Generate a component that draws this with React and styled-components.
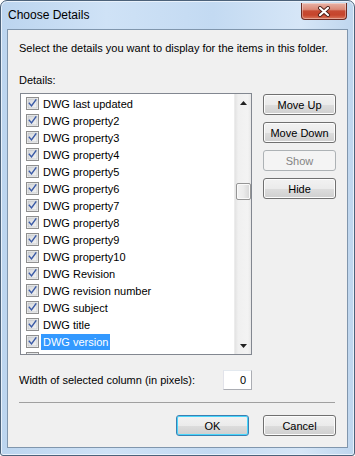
import React from "react"
import styled, { createGlobalStyle } from "styled-components"

const GlobalStyle = createGlobalStyle`
  html, body {
    margin: 0;
    padding: 0;
    background: #ffffff;
  }
  body {
    font-family: "Liberation Sans", Arial, sans-serif;
    font-size: 11px;
    color: #000;
  }
  * {
    box-sizing: border-box;
  }
`

// last row is scrolled half out of view, only its checkbox top shows
const details = [
  { label: "DWG last updated" },
  { label: "DWG property2" },
  { label: "DWG property3" },
  { label: "DWG property4" },
  { label: "DWG property5" },
  { label: "DWG property6" },
  { label: "DWG property7" },
  { label: "DWG property8" },
  { label: "DWG property9" },
  { label: "DWG property10" },
  { label: "DWG Revision" },
  { label: "DWG revision number" },
  { label: "DWG subject" },
  { label: "DWG title" },
  { label: "DWG version", selected: true },
  { label: "" },
]

function CheckBox() {
  return (
    <svg width="13" height="13" viewBox="0 0 13 13">
      <defs>
        <linearGradient id="cbg" x1="0" y1="0" x2="1" y2="1">
          <stop offset="0" stopColor="#d4d6d9" />
          <stop offset="1" stopColor="#f4f4f4" />
        </linearGradient>
      </defs>
      <rect x="0.5" y="0.5" width="12" height="12" fill="#f6f6f6" stroke="#8f8f8f" />
      <rect x="2" y="2" width="9" height="9" fill="url(#cbg)" stroke="#b4b8bd" strokeWidth="0.6" />
      <path
        d="M3.4 6.4 L5.5 8.9 L9.8 3"
        fill="none"
        stroke="#3a5aa6"
        strokeWidth="1.5"
        strokeLinecap="square"
      />
    </svg>
  )
}

function CloseGlyph() {
  return (
    <svg width="14" height="11" viewBox="0 0 14 11">
      <path
        d="M3 2 L11 9 M11 2 L3 9"
        stroke="#4a1e18"
        strokeWidth="4"
        strokeLinecap="round"
      />
      <path
        d="M3 2 L11 9 M11 2 L3 9"
        stroke="#ffffff"
        strokeWidth="2.2"
        strokeLinecap="round"
      />
    </svg>
  )
}

function Arrow({ down }) {
  return (
    <svg width="7" height="4" viewBox="0 0 7 4">
      <path d={down ? "M0 0 H7 L3.5 4 Z" : "M0 4 H7 L3.5 0 Z"} fill="#222" />
    </svg>
  )
}

export default function App() {
  return (
    <>
      <GlobalStyle />
      <Window>
        <TitleBar>
          <Title>Choose Details</Title>
          <CloseButton>
            <CloseGlyph />
          </CloseButton>
        </TitleBar>
        <Client>
          <Intro>Select the details you want to display for the items in this folder.</Intro>
          <FieldLabel>Details:</FieldLabel>
          <Body>
            <ListBox>
              <Items>
                {details.map((d, i) => (
                  <Item key={i}>
                    <CheckBox />
                    {d.label && <ItemText selected={d.selected}>{d.label}</ItemText>}
                  </Item>
                ))}
              </Items>
              <ScrollBar>
                <ScrollArrow>
                  <Arrow />
                </ScrollArrow>
                <Track>
                  <Thumb />
                </Track>
                <ScrollArrow>
                  <Arrow down />
                </ScrollArrow>
              </ScrollBar>
            </ListBox>
            <SideButtons>
              <Button>Move Up</Button>
              <Button>Move Down</Button>
              <Button disabled>Show</Button>
              <Button>Hide</Button>
            </SideButtons>
          </Body>
          <WidthRow>
            <span>Width of selected column (in pixels):</span>
            <NumberBox>0</NumberBox>
          </WidthRow>
          <Separator />
          <Footer>
            <Button primary>OK</Button>
            <Button>Cancel</Button>
          </Footer>
        </Client>
      </Window>
    </>
  )
}

const Window = styled.div`
  width: 355px;
  height: 456px;
  display: flex;
  flex-direction: column;
  border: 1px solid #4c627a;
  border-radius: 7px 7px 3px 3px;
  padding: 0 6px 7px 6px;
  background: linear-gradient(
    90deg,
    #bcd5ef 0%,
    #cfe2f6 30%,
    #c3daf2 60%,
    #d6e6f7 85%,
    #bfd6ee 100%
  );
  box-shadow: inset 0 0 0 1px #e8f1fb;
`

const TitleBar = styled.div`
  height: 28px;
  display: flex;
  align-items: flex-start;
  justify-content: space-between;
  padding-left: 1px;
`

const Title = styled.div`
  font-size: 12px;
  margin-top: 7px;
`

const CloseButton = styled.div`
  width: 46px;
  height: 17px;
  margin-top: 2px;
  margin-right: 1px;
  display: flex;
  align-items: center;
  justify-content: center;
  border: 1px solid #6b2a22;
  border-top: none;
  border-radius: 0 0 4px 4px;
  background: linear-gradient(
    180deg,
    #e8b2a6 0%,
    #dc8a78 40%,
    #c74b33 50%,
    #c6452c 75%,
    #d9765c 100%
  );
  box-shadow: inset 0 0 0 1px rgba(255, 255, 255, 0.35);
`

const Client = styled.div`
  flex: 1;
  display: flex;
  flex-direction: column;
  background: #f0f0f0;
  border: 1px solid #8096ad;
  padding: 11px 11px 0 11px;
`

const Intro = styled.div`
  line-height: 15px;
  white-space: nowrap;
`

const FieldLabel = styled.div`
  line-height: 15px;
  margin-top: 17px;
`

const Body = styled.div`
  display: flex;
  align-items: flex-start;
  gap: 11px;
  margin-top: 5px;
  padding-left: 1px;
`

const ListBox = styled.div`
  width: 232px;
  height: 262px;
  display: flex;
  border: 1px solid #828790;
  background: #fff;
`

const Items = styled.div`
  flex: 1;
  overflow: hidden;
  padding-top: 1px;
`

const Item = styled.div`
  height: 17px;
  display: flex;
  align-items: center;
  padding-left: 5px;
  gap: 1px;
  svg {
    flex: none;
  }
`

const ItemText = styled.span`
  line-height: 16px;
  padding: 0 2px;
  margin-left: 1px;
  white-space: nowrap;
  background: ${(p) => (p.selected ? "#3399ff" : "transparent")};
  color: ${(p) => (p.selected ? "#fff" : "#000")};
`

const ScrollBar = styled.div`
  width: 17px;
  display: flex;
  flex-direction: column;
  background: linear-gradient(90deg, #e3e3e3 0%, #f0f0f0 20%, #f3f3f3 80%, #e8e8e8 100%);
  border-left: 1px solid #ececec;
`

const ScrollArrow = styled.div`
  height: 17px;
  display: flex;
  align-items: center;
  justify-content: center;
`

const Track = styled.div`
  flex: 1;
  padding-top: 72px;
  display: flex;
  justify-content: center;
`

const Thumb = styled.div`
  width: 15px;
  height: 17px;
  border: 1px solid #959595;
  border-radius: 2px;
  background: linear-gradient(90deg, #f2f2f2 0%, #ebebeb 50%, #d6d6d6 100%);
  box-shadow: inset 0 0 0 1px #fafafa;
`

const SideButtons = styled.div`
  display: flex;
  flex-direction: column;
  gap: 7px;
  padding-top: 1px;
`

const Button = styled.div`
  width: 73px;
  height: 21px;
  display: flex;
  align-items: center;
  justify-content: center;
  border-radius: 3px;
  border: 1px solid ${(p) => (p.disabled ? "#adb2b5" : p.primary ? "#3c7fb1" : "#707070")};
  color: ${(p) => (p.disabled ? "#838383" : "#000")};
  background: ${(p) =>
    p.disabled
      ? "#f4f4f4"
      : "linear-gradient(180deg, #f2f2f2 0%, #ebebeb 50%, #dddddd 51%, #cfcfcf 100%)"};
  box-shadow: inset 0 0 0 1px ${(p) => (p.primary ? "#48d6fc" : p.disabled ? "#f4f4f4" : "#fcfcfc")};
`

const WidthRow = styled.div`
  display: flex;
  align-items: center;
  justify-content: space-between;
  width: 232px;
  margin-top: 15px;
`

const NumberBox = styled.div`
  width: 29px;
  height: 20px;
  border: 1px solid #abadb3;
  border-top-color: #e3e9ef;
  border-left-color: #e2e3ea;
  background: #fff;
  text-align: right;
  padding: 2px 5px 0 0;
  margin-right: -1px;
  line-height: 15px;
`

const Separator = styled.div`
  height: 1px;
  width: 316px;
  background: #a0a0a0;
  margin-top: 12px;
`

const Footer = styled.div`
  display: flex;
  justify-content: flex-end;
  gap: 14px;
  margin-top: 12px;
  width: 317px;
`
